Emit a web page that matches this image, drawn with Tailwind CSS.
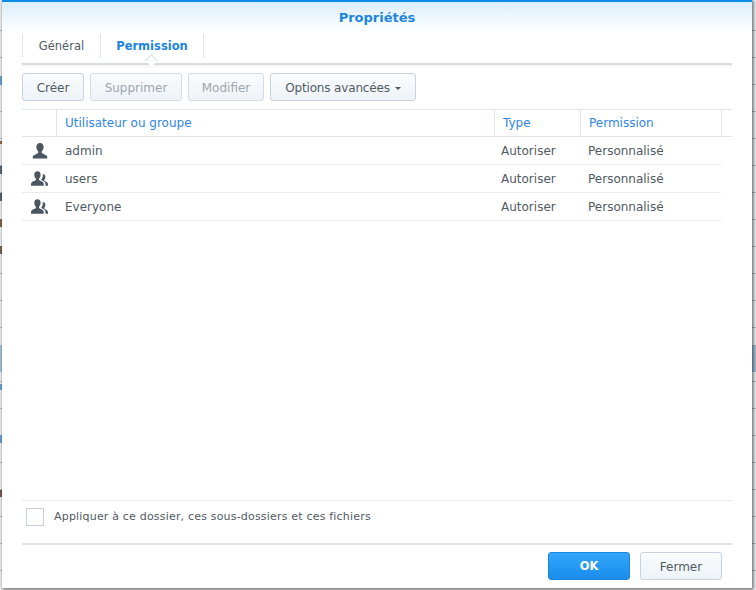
<!DOCTYPE html>
<html lang="fr">
<head>
  <meta charset="UTF-8">
  <title>Propriétés</title>
  <script src="https://cdn.jsdelivr.net/npm/@tailwindcss/browser@4"></script>
</head>
<body class="relative w-[756px] h-[590px] overflow-hidden bg-[#f7f8f9] bg-[repeating-linear-gradient(to_bottom,transparent_0,transparent_26px,#b9bfc5_26px,#b9bfc5_27px)] bg-[position:0_4px] font-['DejaVu_Sans',sans-serif] text-[12px] text-[#505a64]">
  <!-- bits of the page behind the dialog -->
  <span class="absolute left-0 top-[76px] h-[9px] w-[2px] bg-[#6fa9d8]"></span>
  <span class="absolute left-0 top-[141px] h-[3px] w-[2px] bg-[#9a6a4a]"></span>
  <span class="absolute left-0 top-[166px] h-[8px] w-[2px] bg-[#5a6a78]"></span>
  <span class="absolute left-0 top-[193px] h-[8px] w-[2px] bg-[#5a6a78]"></span>
  <span class="absolute left-0 top-[219px] h-[8px] w-[2px] bg-[#8a6a50]"></span>
  <span class="absolute left-0 top-[246px] h-[8px] w-[2px] bg-[#7a6a5a]"></span>
  <span class="absolute left-0 top-[345px] h-[27px] w-[2px] bg-[#a9cbe6]"></span>
  <span class="absolute left-0 top-[384px] h-[6px] w-[2px] bg-[#6fa9d8]"></span>
  <span class="absolute left-0 top-[435px] h-[8px] w-[2px] bg-[#6fa9d8]"></span>
  <span class="absolute left-0 top-[490px] h-[7px] w-[2px] bg-[#7a5a5a]"></span>
  <span class="absolute right-0 top-[345px] h-[27px] w-[4px] bg-[#a9c4da]"></span>

  <!-- dialog -->
  <div class="absolute left-[2px] top-0 w-[750px] h-[588px] flex flex-col bg-white border-t-[2px] border-[#0a8de8] shadow-[1px_1px_3px_1px_rgba(0,0,0,0.5)]">
    <div class="h-[30px] shrink-0 flex items-center justify-center bg-gradient-to-b from-[#dbeefb] to-white pt-[2px] text-[13px] font-bold text-[#1d85dd]">Propriétés</div>

    <div class="mx-[20px] flex flex-col flex-1">
      <!-- tabs -->
      <div class="relative flex h-[33px] border-b-[2px] border-[#d9dcde] pt-[2px]">
        <div class="flex h-[24px] w-[79px] items-center justify-center border-x border-[#dfe5ea] pt-[2px] text-[11.5px]">Général</div>
        <div class="flex h-[24px] w-[103px] items-center justify-center border-r border-[#dfe5ea] pt-[2px] text-[11.5px] font-bold text-[#1d85dd]">Permission</div>
        <div class="absolute left-[125px] top-[24px] h-[9px] w-[9px] rotate-45 border-l border-t border-[#d9dcde] bg-white"></div>
      </div>
      <div class="h-[4px] bg-gradient-to-b from-[#f4f4f4] to-white"></div>

      <!-- toolbar -->
      <div class="flex gap-[6px] pt-[4px] h-[40px]">
        <button class="h-[28px] w-[62px] rounded-[3px] border border-[#c7d3de] bg-gradient-to-b from-[#fafcfd] to-[#eef3f8] pt-[1px]">Créer</button>
        <button class="h-[28px] w-[92px] rounded-[3px] border border-[#d3dce5] bg-gradient-to-b from-[#fafcfd] to-[#eef3f8] pt-[1px] text-[#9fa6ad]">Supprimer</button>
        <button class="h-[28px] w-[76px] rounded-[3px] border border-[#d3dce5] bg-gradient-to-b from-[#fafcfd] to-[#eef3f8] pt-[1px] text-[#9fa6ad]">Modifier</button>
        <button class="flex h-[28px] w-[146px] items-center justify-center gap-[5px] rounded-[3px] border border-[#c7d3de] bg-gradient-to-b from-[#fafcfd] to-[#eef3f8] pt-[1px] tracking-[-0.15px]">Options avancées <span class="mt-[2px] border-x-[3px] border-t-[3px] border-x-transparent border-t-[#505a64]"></span></button>
      </div>

      <!-- table -->
      <div class="flex h-[28px] border-y border-[#dfe5ec] text-[#2f86e6]">
        <div class="w-[35px] border-r border-[#dfe5ec]"></div>
        <div class="flex w-[438px] items-center border-r border-[#dfe5ec] pl-[8px]">Utilisateur ou groupe</div>
        <div class="flex w-[86px] items-center border-r border-[#dfe5ec] pl-[8px]">Type</div>
        <div class="flex w-[141px] items-center border-r border-[#dfe5ec] pl-[8px]">Permission</div>
      </div>
      <div class="flex h-[28px] w-[699px] items-center border-b border-[#e6ebf0]">
        <div class="flex w-[35px] justify-center">
          <svg width="18" height="18" viewBox="0 0 18 18" fill="#4b5661"><path d="M9 1C6.600 1 5.300 2.800 5.400 5c.1 1.800.7 3.200 1.700 4.300.3.400.3 1.200 0 1.600-1.100 1.100-4.400 1.700-5.100 3.200-.3.700-.3 1.600-.3 2.400h14.600c0-.8 0-1.700-.3-2.400-.7-1.500-4-2.100-5.100-3.200-.3-.4-.3-1.200 0-1.600 1-1.100 1.600-2.500 1.700-4.300C12.700 2.800 11.400 1 9 1z"/></svg>
        </div>
        <div class="w-[437px] pl-[8px]">admin</div>
        <div class="w-[87px] pl-[7px]">Autoriser</div>
        <div class="pl-[7px]">Personnalisé</div>
      </div>
      <div class="flex h-[28px] w-[699px] items-center border-b border-[#e6ebf0]">
        <div class="flex w-[35px] justify-center">
          <svg width="17" height="15" viewBox="1 2 14.500 12.500" fill="#4b5661"><path d="M6.500 2C4.700 2 3.700 3.400 3.800 5.100c.1 1.400.5 2.500 1.300 3.300.2.300.2.900 0 1.200-.8.800-3.300 1.300-3.900 2.500-.2.500-.2 1.300-.2 2.400h10.900c0-1.100 0-1.900-.2-2.400-.6-1.200-3-1.700-3.800-2.500-.2-.3-.2-.9 0-1.200.8-.8 1.200-1.900 1.300-3.300C9.300 3.400 8.300 2 6.500 2z"/><path d="M11.300 4.600c1.300 0 2.100 1 2 2.300-.1 1-.4 1.800-.9 2.400-.2.200-.2.700 0 .9.600.6 2.300.9 2.800 1.800.2.400.3 1.300.3 2.400h-2.100c0-1.500-.2-2.300-.6-2.900-.7-1-2.300-1.400-2.900-2-.1-.2-.1-.4 0-.6.600-.7 1.100-1.600 1.200-2.800 0-.6 0-1.200-.2-1.700.1-.1.300-.1.400-.1z"/></svg>
        </div>
        <div class="w-[437px] pl-[8px]">users</div>
        <div class="w-[87px] pl-[7px]">Autoriser</div>
        <div class="pl-[7px]">Personnalisé</div>
      </div>
      <div class="flex h-[28px] w-[699px] items-center border-b border-[#e6ebf0]">
        <div class="flex w-[35px] justify-center">
          <svg width="17" height="15" viewBox="1 2 14.500 12.500" fill="#4b5661"><path d="M6.500 2C4.700 2 3.700 3.400 3.800 5.100c.1 1.400.5 2.500 1.300 3.300.2.300.2.900 0 1.200-.8.800-3.300 1.300-3.900 2.500-.2.500-.2 1.300-.2 2.400h10.900c0-1.100 0-1.900-.2-2.400-.6-1.200-3-1.700-3.800-2.500-.2-.3-.2-.9 0-1.200.8-.8 1.200-1.900 1.300-3.300C9.300 3.400 8.300 2 6.500 2z"/><path d="M11.300 4.600c1.300 0 2.100 1 2 2.300-.1 1-.4 1.800-.9 2.400-.2.200-.2.700 0 .9.600.6 2.300.9 2.800 1.800.2.400.3 1.300.3 2.400h-2.100c0-1.500-.2-2.300-.6-2.900-.7-1-2.300-1.400-2.900-2-.1-.2-.1-.4 0-.6.600-.7 1.100-1.600 1.200-2.800 0-.6 0-1.200-.2-1.700.1-.1.300-.1.400-.1z"/></svg>
        </div>
        <div class="w-[437px] pl-[8px]">Everyone</div>
        <div class="w-[87px] pl-[7px]">Autoriser</div>
        <div class="pl-[7px]">Personnalisé</div>
      </div>

      <div class="flex-1"></div>

      <!-- apply checkbox -->
      <div class="flex h-[43px] items-center gap-[10px] border-t border-[#e6ebf0] pb-[10px] pl-[4px] text-[11px] tracking-[0.19px]">
        <span class="h-[18px] w-[18px] border border-[#c4d1dc] bg-white"></span>
        <span>Appliquer à ce dossier, ces sous-dossiers et ces fichiers</span>
      </div>

      <!-- footer -->
      <div class="flex h-[45px] justify-end gap-[10px] border-t-[2px] border-[#e2e3e4] pt-[7px] pr-[10px]">
        <button class="h-[28px] w-[82px] rounded-[3px] border border-[#1a87dc] bg-gradient-to-b from-[#32a6fb] to-[#1a8ded] pt-[1px] text-[11.5px] font-bold text-white">OK</button>
        <button class="h-[28px] w-[82px] rounded-[3px] border border-[#c7d3de] bg-gradient-to-b from-[#fafcfd] to-[#eef3f8] pt-[1px]">Fermer</button>
      </div>
    </div>
  </div>
</body>
</html>
